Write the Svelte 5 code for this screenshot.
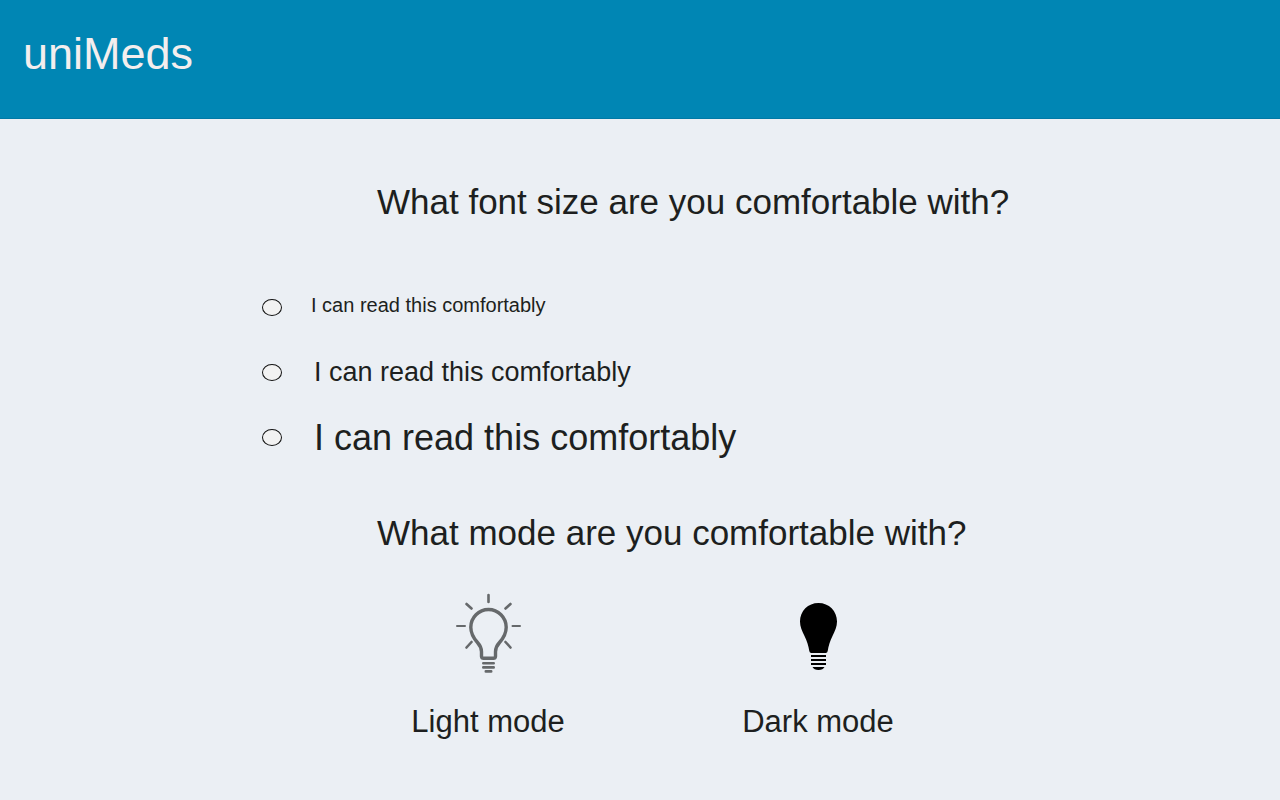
<script>
  const sizes = ['small', 'medium', 'large'];
  let fontSize = $state('');
  let mode = $state('');
</script>

<header>
  <h1>uniMeds</h1>
</header>

<main>
  <h2 id="size-question">What font size are you comfortable with?</h2>
  <div class="sizes" role="radiogroup" aria-labelledby="size-question">
    {#each sizes as size}
      <label class={size}>
        <input type="radio" name="font-size" value={size} bind:group={fontSize} />
        <span>I can read this comfortably</span>
      </label>
    {/each}
  </div>

  <h2 id="mode-question">What mode are you comfortable with?</h2>
  <div class="modes" role="group" aria-labelledby="mode-question">
    <button type="button" aria-pressed={mode === 'light'} onclick={() => (mode = 'light')}>
      <svg width="65" height="80" viewBox="0 0 65 80" fill="none" stroke="#66696b" stroke-width="2.4" stroke-linecap="round" aria-hidden="true">
        <path stroke-width="2.600" d="M32.500 2v7M10.500 11l5 4.500M54.500 11l-5 4.500M10.500 54.500l5-5.500M54.500 54.500l-5-5.500" />
        <path stroke-width="2" d="M1 33h8M56.500 33H64" />
        <path
          stroke-width="3.4"
          stroke-linejoin="round"
          d="M27.500 65.300q-1.800 0-2-2v-4.500c0-3.500-1-6-4-9.300C17.500 45 14.800 40.500 14.800 34.200a17.700 17.700 0 0 1 35.400 0c0 6.300-2.700 10.800-6.700 15.300-3 3.300-4 5.800-4 9.300v4.500q-.2 2-2 2z"
        />
        <path stroke-width="2.600" d="M27.300 70.300h10.400M27.300 74.400h10.400M29.800 78.400h5.400" />
      </svg>
      <span>Light mode</span>
    </button>
    <button type="button" aria-pressed={mode === 'dark'} onclick={() => (mode = 'dark')}>
      <svg width="37" height="80" viewBox="0 0 37 80" aria-hidden="true">
        <path d="M18.500 10C8 10 0 18 0 28.500c0 5 2 9.500 4.500 14.500 2.500 5 4 10 4.800 15q.3 2 2 2h14.400q1.700 0 2-2c.8-5 2.300-10 4.800-15C35 38 37 33.500 37 28.500 37 18 29 10 18.500 10z" />
        <path d="M11 62h15v2H11zM11 66h15v2H11zM11 70h15v2H11zM12.500 74h12c-1 2-3 3-6 3s-5-1-6-3z" />
      </svg>
      <span>Dark mode</span>
    </button>
  </div>
</main>

<style>
  :global(body) {
    margin: 0;
    background: #ebeff4;
    color: #1d1f20;
    font-family: "Liberation Sans", Arial, sans-serif;
  }

  header {
    padding: 28px 23px 38px;
    background: #0086b4;
    border-bottom: 1px solid #0079a6;
  }

  h1 {
    margin: 0;
    color: #f3eeee;
    font-size: 45px;
    font-weight: 400;
    line-height: 52px;
  }

  main {
    max-width: 756px;
    margin: 0 auto;
    padding: 63px 16px;
  }

  h2 {
    margin: 0;
    padding-left: 115px;
    font-size: 35px;
    font-weight: 400;
    line-height: 40px;
  }

  .sizes {
    display: grid;
    grid-auto-rows: 65px;
    justify-items: start;
    margin: 53px 0 43px;
  }

  label {
    display: flex;
    align-items: center;
    gap: 32px;
  }

  .small {
    gap: 29px;
    font-size: 20px;
  }

  .small span {
    padding-bottom: 4px;
  }

  .medium {
    font-size: 27px;
  }

  .large {
    font-size: 36px;
  }

  input {
    appearance: none;
    flex: none;
    box-sizing: border-box;
    width: 20px;
    height: 17px;
    margin: 0;
    border: 1px solid #111;
    border-radius: 50%;
    background: #f2f2f2;
  }

  input:checked {
    background: #0086b4;
  }

  .modes {
    display: grid;
    grid-template-columns: 1fr 1fr;
    margin: 40px 35px 0 61px;
  }

  button {
    display: flex;
    flex-direction: column;
    align-items: center;
    gap: 31px;
    padding: 0;
    border: 0;
    background: none;
    color: inherit;
    font-family: inherit;
    font-size: 31px;
    line-height: 36px;
  }
</style>
